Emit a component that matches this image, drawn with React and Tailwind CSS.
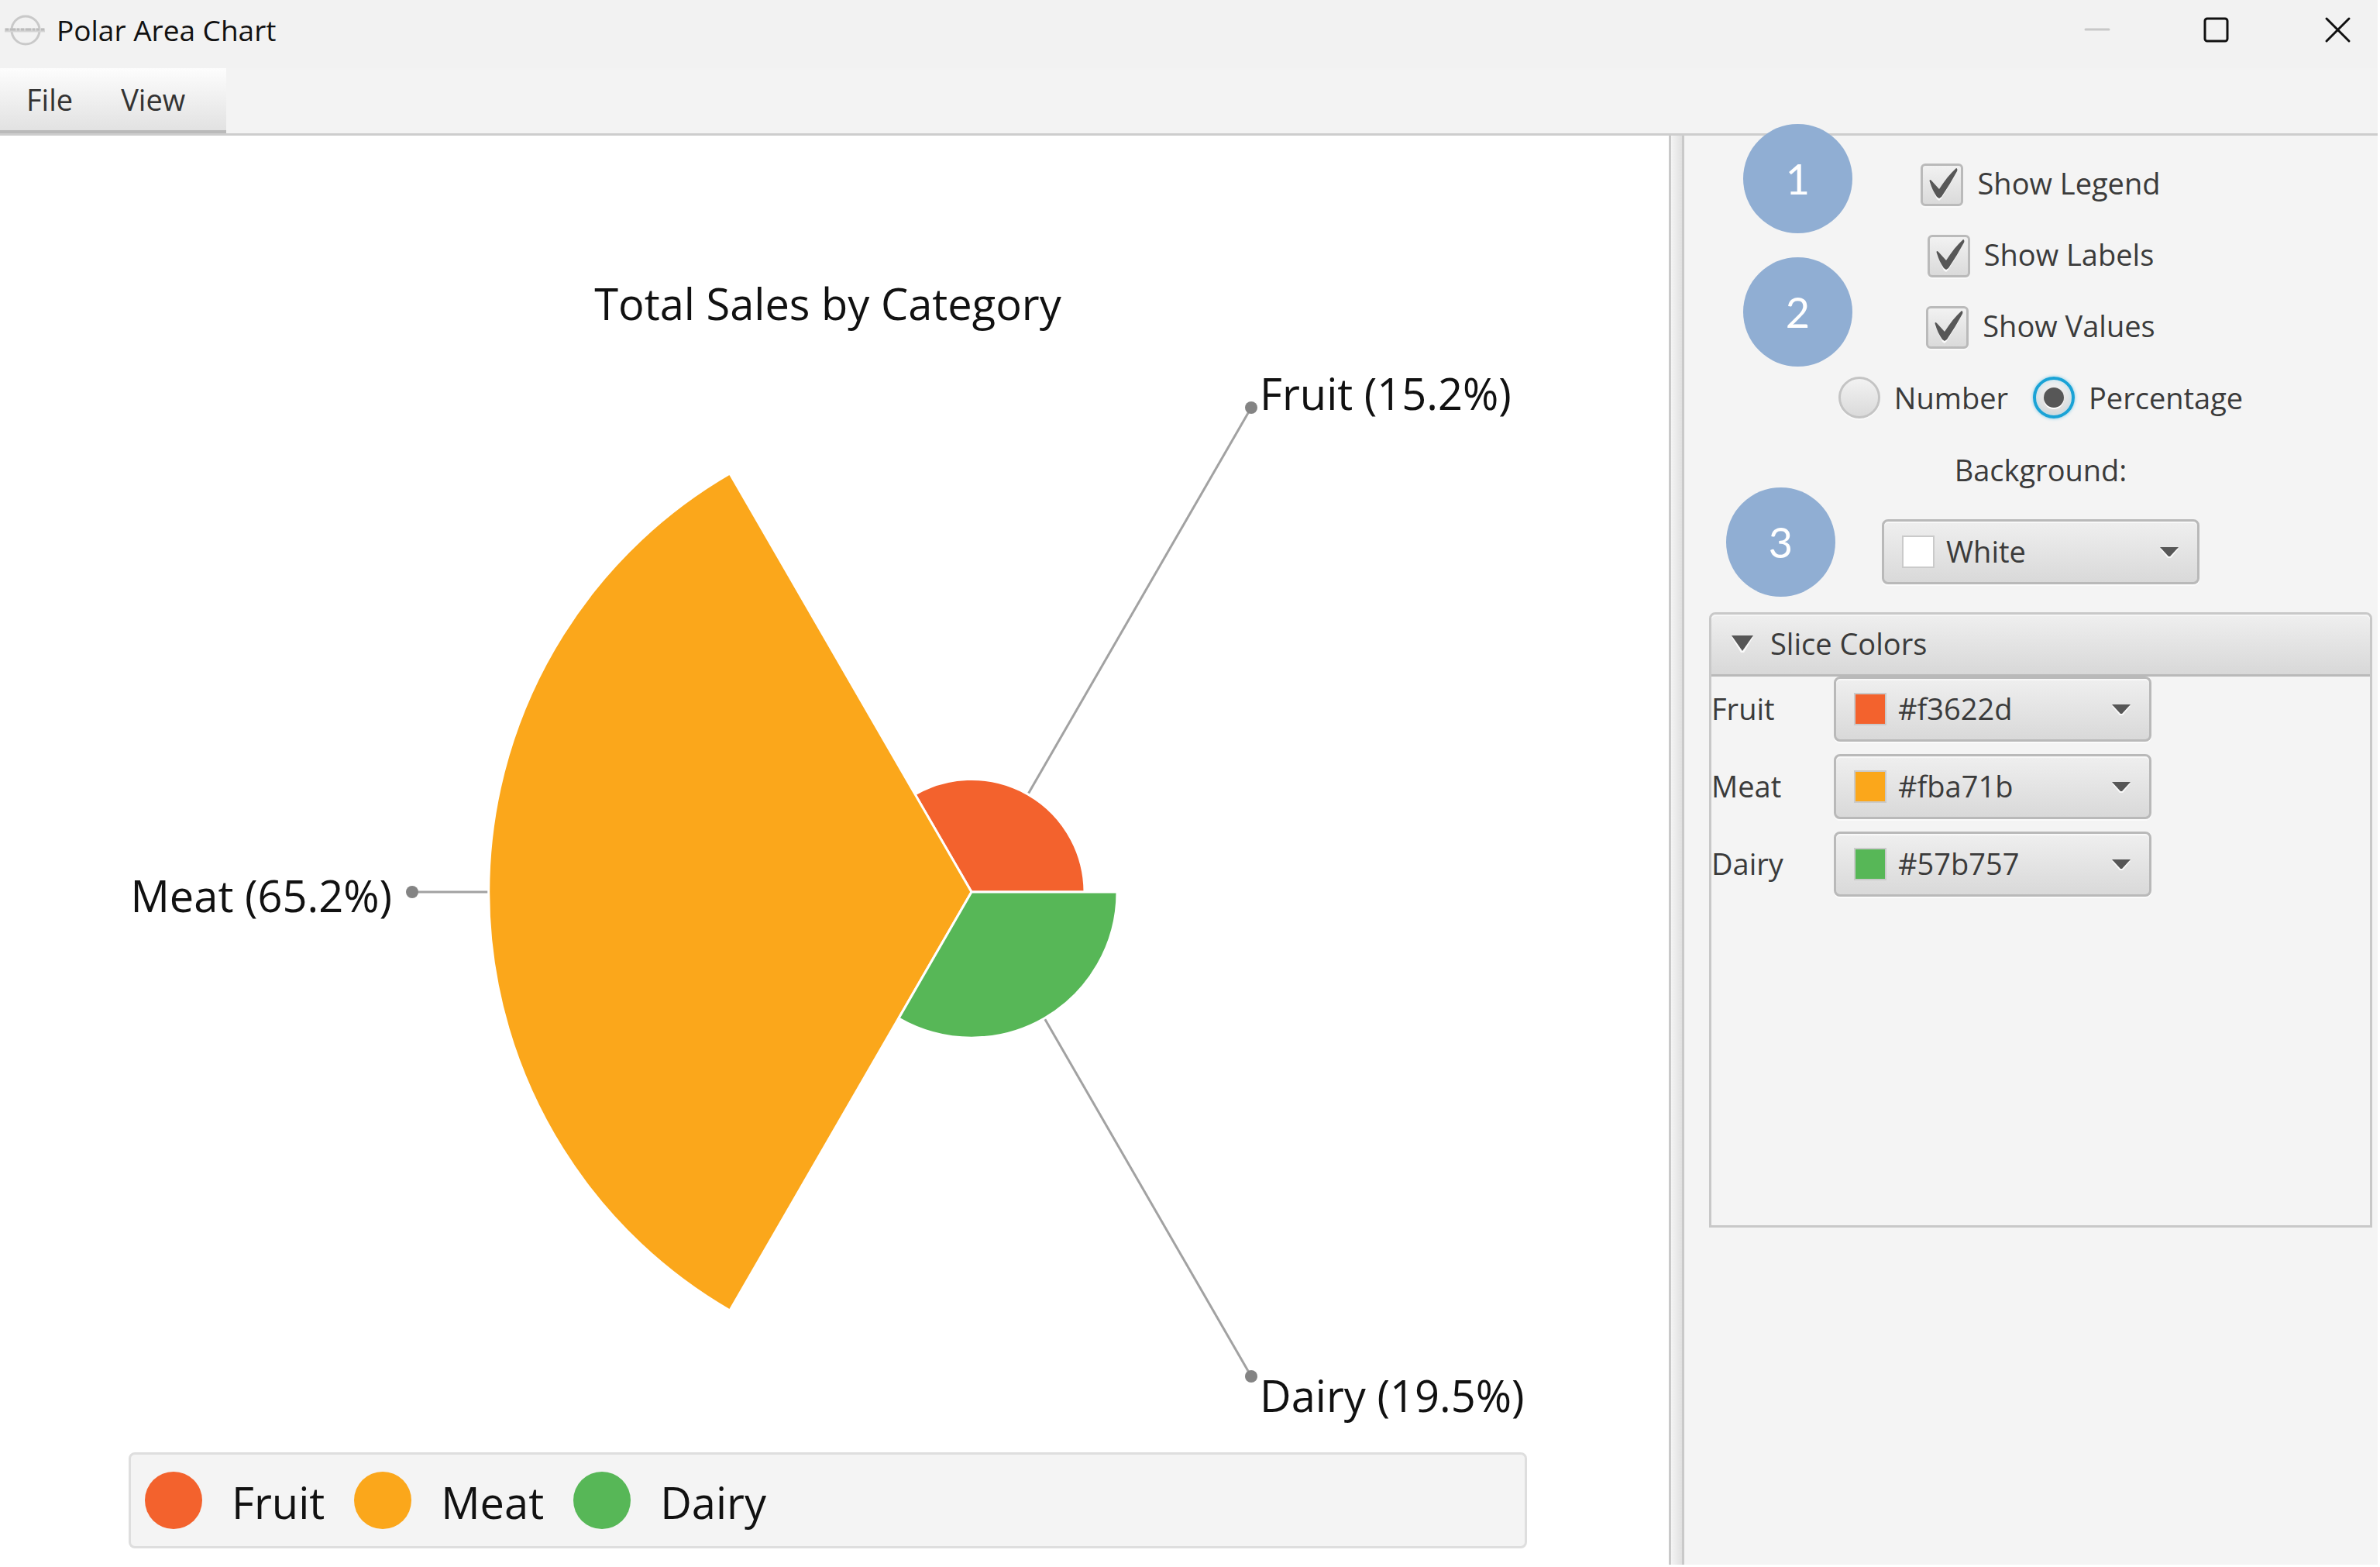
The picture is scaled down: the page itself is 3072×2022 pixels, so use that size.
import { useState } from "react";

const SLICES = [
  { name: "Fruit", color: "#f3622d", dot: "bg-[#f3622d]" },
  { name: "Meat", color: "#fba71b", dot: "bg-[#fba71b]" },
  { name: "Dairy", color: "#57b757", dot: "bg-[#57b757]" },
];

function WindowButton({ label, className, children }) {
  return (
    <button type="button" aria-label={label} className={`flex h-full items-center ${className}`}>
      <svg className="size-9" viewBox="0 0 36 36" fill="none" strokeWidth="3" strokeLinecap="round">
        {children}
      </svg>
    </button>
  );
}

function TitleBar() {
  return (
    <header className="flex h-[88px] items-center bg-[#f2f2f2] pb-[10px]">
      <svg className="ml-[5px] h-14 w-[54px]" viewBox="0 0 54 56" fill="none" aria-hidden="true">
        <circle cx="28" cy="28" r="18" stroke="#c9c9c9" strokeWidth="3" />
        <path d="M1 28H53" stroke="#d4d4d4" strokeWidth="5" />
        <path d="M2 27H52" stroke="#bcbcbc" strokeWidth="3" strokeDasharray="4 2 7 2 3 2" />
      </svg>
      <h1 className="ml-[14px] text-[37px] leading-[52px] text-[#111]">Polar Area Chart</h1>
      <div className="ml-auto flex h-full">
        <WindowButton label="Minimize" className="w-[154px] justify-center">
          <path d="M3 17H33" stroke="#c8c8c8" />
        </WindowButton>
        <WindowButton label="Maximize" className="w-[154px] justify-center">
          <rect x="3" y="3" width="29" height="29" rx="3" stroke="#111" />
        </WindowButton>
        <WindowButton label="Close" className="w-[131px] justify-end pr-[34px]">
          <path d="M4 3L33 32M33 3L4 32" stroke="#111" />
        </WindowButton>
      </div>
    </header>
  );
}

function MenuBar() {
  return (
    <nav className="border-b-[3px] border-[#cdcdcd] bg-[#f3f3f3]">
      <div className="flex h-[84px] w-[292px] items-center gap-[62px] border-b-4 border-[#bababa] bg-linear-to-b from-[#fdfdfd] to-[#e2e2e2] pl-[34px] text-[38px] leading-[52px] text-[#333]">
        <button type="button">File</button>
        <button type="button">View</button>
      </div>
    </nav>
  );
}

function PolarChart() {
  return (
    <svg
      className="block w-full overflow-visible"
      viewBox="-1088 -720 1805 1420"
      role="img"
      aria-label="Total Sales by Category"
      fontSize="56"
    >
      <g stroke="#a2a2a2" strokeWidth="3">
        <path d="M0 0L361 -625" />
        <path d="M0 0L361 625" />
        <path d="M0 0H-722" />
      </g>
      <g fill="#848484">
        <circle cx="361" cy="-625" r="8" />
        <circle cx="361" cy="625" r="8" />
        <circle cx="-722" cy="0" r="8" />
      </g>
      <g stroke="#fff" strokeWidth="3" strokeLinejoin="round">
        <path d="M0 0H146A146 146 0 0 0 -73 -126Z" fill="#f3622d" />
        <path d="M0 0L-312 -540A624 624 0 0 0 -312 540Z" fill="#fba71b" />
        <path d="M0 0L-94 163A188 188 0 0 0 188 0Z" fill="#57b757" />
      </g>
      <g fill="#111">
        <text x="372" y="-622">Fruit (15.2%)</text>
        <text x="-748" y="26" textAnchor="end">Meat (65.2%)</text>
        <text x="372" y="671">Dairy (19.5%)</text>
      </g>
    </svg>
  );
}

function Legend() {
  return (
    <ul className="mt-[23px] flex h-[124px] items-center gap-[38px] rounded-lg border-3 border-[#dedede] bg-[#f4f4f4] pl-[18px]">
      {SLICES.map((s) => (
        <li key={s.name} className="flex items-center gap-[38px]">
          <span className={`size-[74px] rounded-full ${s.dot}`} />
          <span className="pt-1 text-[56px] leading-[80px] text-[#111]">{s.name}</span>
        </li>
      ))}
    </ul>
  );
}

function CheckBox({ label, checked, onChange }) {
  return (
    <label className="flex h-14 items-center gap-[18px]">
      <span className="grid">
        <input
          type="checkbox"
          checked={checked}
          onChange={(e) => onChange(e.target.checked)}
          className="col-start-1 row-start-1 size-[55px] appearance-none rounded-md border-3 border-[#bababa] bg-linear-to-b from-[#f2f2f2] to-[#dadada] shadow-[0_2px_0_#fafafa]"
        />
        {checked && (
          <svg className="pointer-events-none col-start-1 row-start-1 size-[55px]" viewBox="0 0 55 55" aria-hidden="true">
            <path d="M12 26C11 24 12 23 14 24L24 35L45 10L47 10C41 22 35 32 27 45L24 48L21 46Z" fill="#fafafa" />
            <path d="M12 24C11 21 12 20 14 22L24 33C31 22 38 13 46 6C47 6 48 8 47 10C41 21 35 31 27 43L24 45L21 43C17 37 14 31 12 24Z" fill="#575757" />
          </svg>
        )}
      </span>
      <span className="pb-1">{label}</span>
    </label>
  );
}

function RadioButton({ label, value, selected, onSelect }) {
  const on = value === selected;
  return (
    <label className="flex items-center gap-[18px]">
      <span className="grid place-items-center">
        <input
          type="radio"
          name="format"
          checked={on}
          onChange={() => onSelect(value)}
          className={`col-start-1 row-start-1 size-[54px] appearance-none rounded-full bg-linear-to-b from-[#f2f2f2] to-[#dadada] ${
            on
              ? "border-4 border-[#1aa3d6] shadow-[0_0_4px_#7cc8e6,inset_0_0_6px_#b9dbe8]"
              : "border-3 border-[#c4c4c4] shadow-[0_2px_0_#fafafa]"
          }`}
        />
        {on && <span className="pointer-events-none col-start-1 row-start-1 size-[26px] rounded-full bg-[#575757] shadow-[0_2px_0_#fff]" />}
      </span>
      {label}
    </label>
  );
}

function ColorPicker({ id, label, value, dot }) {
  return (
    <div className="grid w-[410px] items-center text-[#3b3b3b]">
      <select
        id={id}
        aria-label={label}
        defaultValue={value}
        className="col-start-1 row-start-1 h-[84px] appearance-none rounded-lg border-3 border-[#b9b9b9] bg-linear-to-b from-[#efefef] to-[#d9d9d9] pb-0.5 pl-[80px] shadow-[0_2px_0_#fbfbfb,inset_0_2px_0_#f8f8f8]"
      >
        <option>{value}</option>
      </select>
      <span className={`pointer-events-none col-start-1 row-start-1 ml-[26px] size-[42px] border-2 border-[#cacaca] ${dot}`} />
      <svg className="pointer-events-none col-start-1 row-start-1 mr-[27px] h-4 w-6 justify-self-end" viewBox="0 0 24 16" aria-hidden="true">
        <path d="M0 4H24L14 16H10Z" fill="#fafafa" />
        <path d="M0 2H24L13 14H11Z" fill="#575757" />
      </svg>
    </div>
  );
}

function SliceColors() {
  return (
    <section className="flex h-[794px] w-full flex-col rounded-t-lg border-3 border-[#c8c8c8]">
      <button
        type="button"
        aria-expanded="true"
        className="flex h-20 shrink-0 items-center gap-[22px] rounded-t-md border-b-3 border-[#b9b9b9] bg-linear-to-b from-[#efefef] to-[#d8d8d8] pb-1 pl-[26px] shadow-[inset_0_2px_0_#f6f6f6]"
      >
        <svg className="h-6 w-7" viewBox="0 0 28 24" aria-hidden="true">
          <path d="M0 4H28L16 24H12Z" fill="#fafafa" />
          <path d="M0 2H28L14 22Z" fill="#575757" />
        </svg>
        Slice Colors
      </button>
      <div className="grid grid-cols-[158px_auto] items-center justify-start gap-y-4">
        {SLICES.map((s) => (
          <div key={s.name} className="contents">
            <label htmlFor={`slice-${s.name}`} className="pb-0.5">{s.name}</label>
            <ColorPicker id={`slice-${s.name}`} value={s.color} dot={s.dot} />
          </div>
        ))}
      </div>
    </section>
  );
}

function Badge({ n, className }) {
  return (
    <span className={`absolute flex size-[141px] items-center justify-center rounded-full bg-[#90aed3] font-['Lato',sans-serif] text-[54px] leading-none text-white ${className}`}>
      {n}
    </span>
  );
}

function Sidebar() {
  const [legend, setLegend] = useState(true);
  const [labels, setLabels] = useState(true);
  const [values, setValues] = useState(true);
  const [format, setFormat] = useState("percentage");
  return (
    <aside className="relative flex w-[895px] shrink-0 flex-col items-center gap-9 bg-[#f4f4f4] pt-[35px] pr-[7px] pl-8 text-[38px] leading-[52px] text-[#3b3b3b]">
      <CheckBox label="Show Legend" checked={legend} onChange={setLegend} />
      <CheckBox label="Show Labels" checked={labels} onChange={setLabels} />
      <CheckBox label="Show Values" checked={values} onChange={setValues} />
      <fieldset className="flex h-14 items-center gap-[32px]">
        <RadioButton label="Number" value="number" selected={format} onSelect={setFormat} />
        <RadioButton label="Percentage" value="percentage" selected={format} onSelect={setFormat} />
      </fieldset>
      <label htmlFor="background" className="flex h-14 items-center">Background:</label>
      <ColorPicker id="background" value="White" dot="bg-white" />
      <SliceColors />
      <Badge n={1} className="top-[-15px] left-[76px]" />
      <Badge n={2} className="top-[157px] left-[76px]" />
      <Badge n={3} className="top-[454px] left-[54px]" />
    </aside>
  );
}

export default function App() {
  return (
    <div className="flex min-h-screen flex-col bg-white pr-[3px] pb-[3px] font-['Open_Sans',sans-serif]">
      <TitleBar />
      <MenuBar />
      <div className="flex flex-1">
        <main className="min-w-0 flex-1 bg-white pt-[176px] pr-[183px] pb-[21px] pl-[166px]">
          <h2 className="text-center text-[56px] leading-[80px] text-[#111]">Total Sales by Category</h2>
          <PolarChart />
          <Legend />
        </main>
        <div className="w-5 shrink-0 border-x-3 border-[#c9c9c9] bg-linear-to-r from-[#f4f4f4] to-[#e0e0e0]" />
        <Sidebar />
      </div>
    </div>
  );
}
